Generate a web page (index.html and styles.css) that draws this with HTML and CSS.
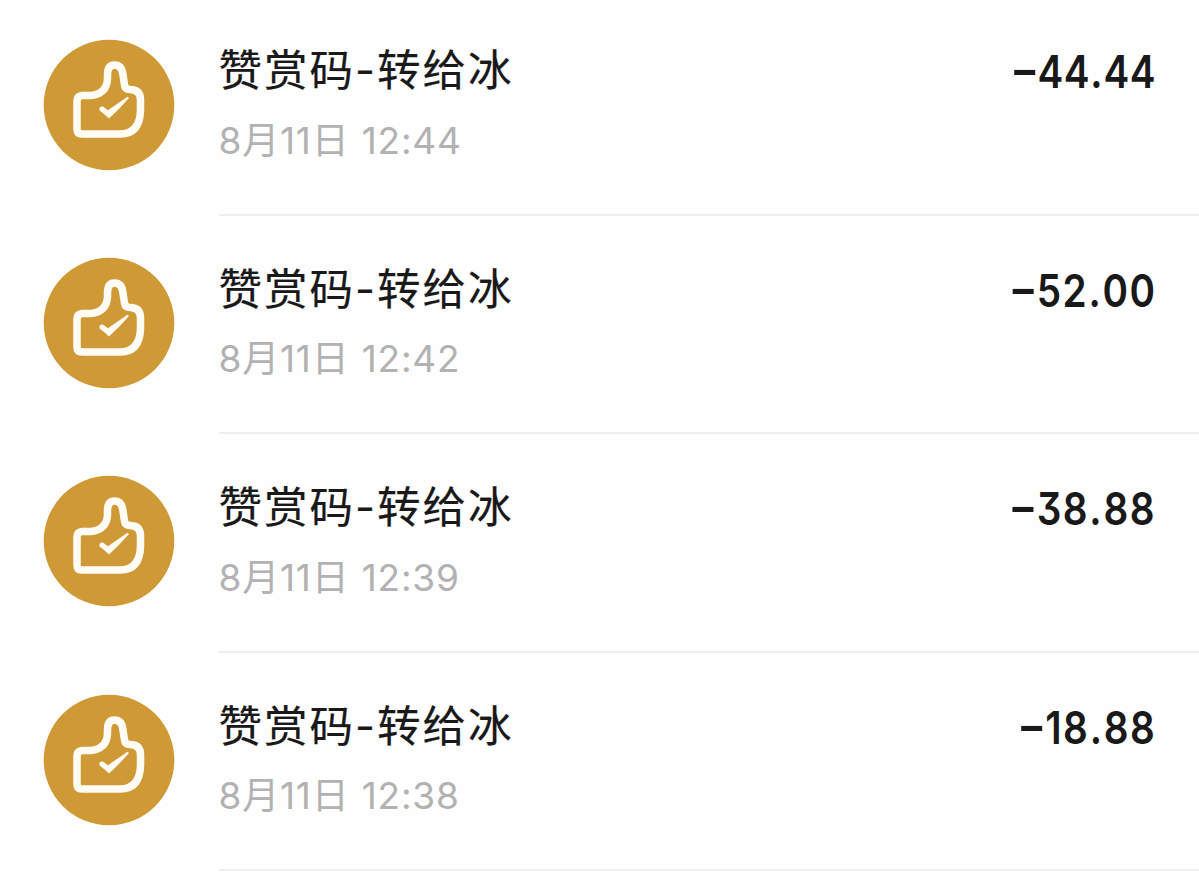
FILE: index.html
```html
<!DOCTYPE html>
<html lang="zh">
<head>
    <meta charset="UTF-8">
    <meta name="viewport" content="width=device-width, initial-scale=1.0">
    <title>账单</title>
    <link rel="stylesheet" href="styles.css">
</head>
<body>

    <!-- 点赞图标 -->
    <svg class="sprite" width="0" height="0">
        <symbol id="thumb" viewBox="0 0 132 132">
            <circle class="disc" cx="66" cy="66" r="65.3"/>
            <path class="hand" d="M34 62Q34 57 39 56.500H48C58 55.500 64 50 64.500 40V36Q64.500 26 71.500 26Q79 26 80 36L81.500 46Q82 50.500 87 50.500Q97.500 50.500 97.500 61V71Q97 95 77 95H39Q34 95 34 90Z"/>
            <path class="tick" d="M56.500 68.500L59.500 67.300L65 71.300Q74 65 84.500 57.800L86 59Q76.500 70 66 79.500Q61.500 75 56.500 71.500Z"/>
        </symbol>
    </svg>

    <div class="bill-list">
        <div class="bill-item">
            <svg class="icon"><use href="#thumb"/></svg>
            <div class="bill-content">
                <div class="info">
                    <div class="title">赞赏码-转给冰</div>
                    <div class="time">8月11日 12:44</div>
                </div>
                <div class="amount tight"><span class="minus">−</span>44<span class="dot">.</span>44</div>
            </div>
        </div>
        <div class="bill-item">
            <svg class="icon"><use href="#thumb"/></svg>
            <div class="bill-content">
                <div class="info">
                    <div class="title">赞赏码-转给冰</div>
                    <div class="time">8月11日 12:42</div>
                </div>
                <div class="amount"><span class="minus">−</span>52<span class="dot">.</span>00</div>
            </div>
        </div>
        <div class="bill-item">
            <svg class="icon"><use href="#thumb"/></svg>
            <div class="bill-content">
                <div class="info">
                    <div class="title">赞赏码-转给冰</div>
                    <div class="time">8月11日 12:39</div>
                </div>
                <div class="amount"><span class="minus">−</span>38<span class="dot">.</span>88</div>
            </div>
        </div>
        <div class="bill-item">
            <svg class="icon"><use href="#thumb"/></svg>
            <div class="bill-content">
                <div class="info">
                    <div class="title">赞赏码-转给冰</div>
                    <div class="time">8月11日 12:38</div>
                </div>
                <div class="amount"><span class="minus">−</span>18<span class="dot">.</span>88</div>
            </div>
        </div>
    </div>

</body>
</html>
```
FILE: styles.css
```css
body {
    margin: 0;
    height: 885px;
    overflow: hidden;
    background-color: #fefefe;
    font-family: 'Inter', 'Noto Sans CJK SC', sans-serif;
}
.sprite {
    display: block;
}
.disc {
    fill: #cf9936;
}
.hand {
    fill: none;
    stroke: #fffdf5;
    stroke-width: 7.5;
    stroke-linejoin: round;
}
.tick {
    fill: #fffdf5;
}
.bill-list {
    margin-top: -2.6px;
}
.bill-item {
    display: flex;
    height: 218.4px;
    padding-left: 43px;
}
.icon {
    width: 132px;
    height: 132px;
    margin-top: 41.1px;
    flex-shrink: 0;
}
.bill-content {
    flex: 1;
    display: flex;
    justify-content: space-between;
    margin-left: 43.5px;
    padding-right: 43px;
    box-sizing: border-box;
    border-bottom: 2px solid #eeeeee;
}
.title {
    margin-top: 43px;
    height: 60px;
    line-height: 60px;
    font-size: 43.5px;
    letter-spacing: 2px;
    color: #191919;
    -webkit-text-stroke: 0.2px #191919;
}
.time {
    margin-top: 18.5px;
    height: 44px;
    line-height: 44px;
    font-size: 37px;
    letter-spacing: 0.8px;
    word-spacing: 1px;
    color: #b2b2b2;
}
.amount {
    margin-top: 45px;
    height: 60px;
    line-height: 60px;
    font-size: 45px;
    font-weight: 600;
    letter-spacing: 1.6px;
    font-feature-settings: 'cv09';
    color: #191919;
    /* 数字收窄 */
    transform: scaleX(0.86);
    transform-origin: right;
}
.tight {
    letter-spacing: 0.5px;
}
.minus {
    margin-right: -3px;
    font-size: 52px;
    font-weight: 500;
    line-height: 0;
    vertical-align: 1px;
}
.dot {
    margin: 0 0.5px;
}
```
